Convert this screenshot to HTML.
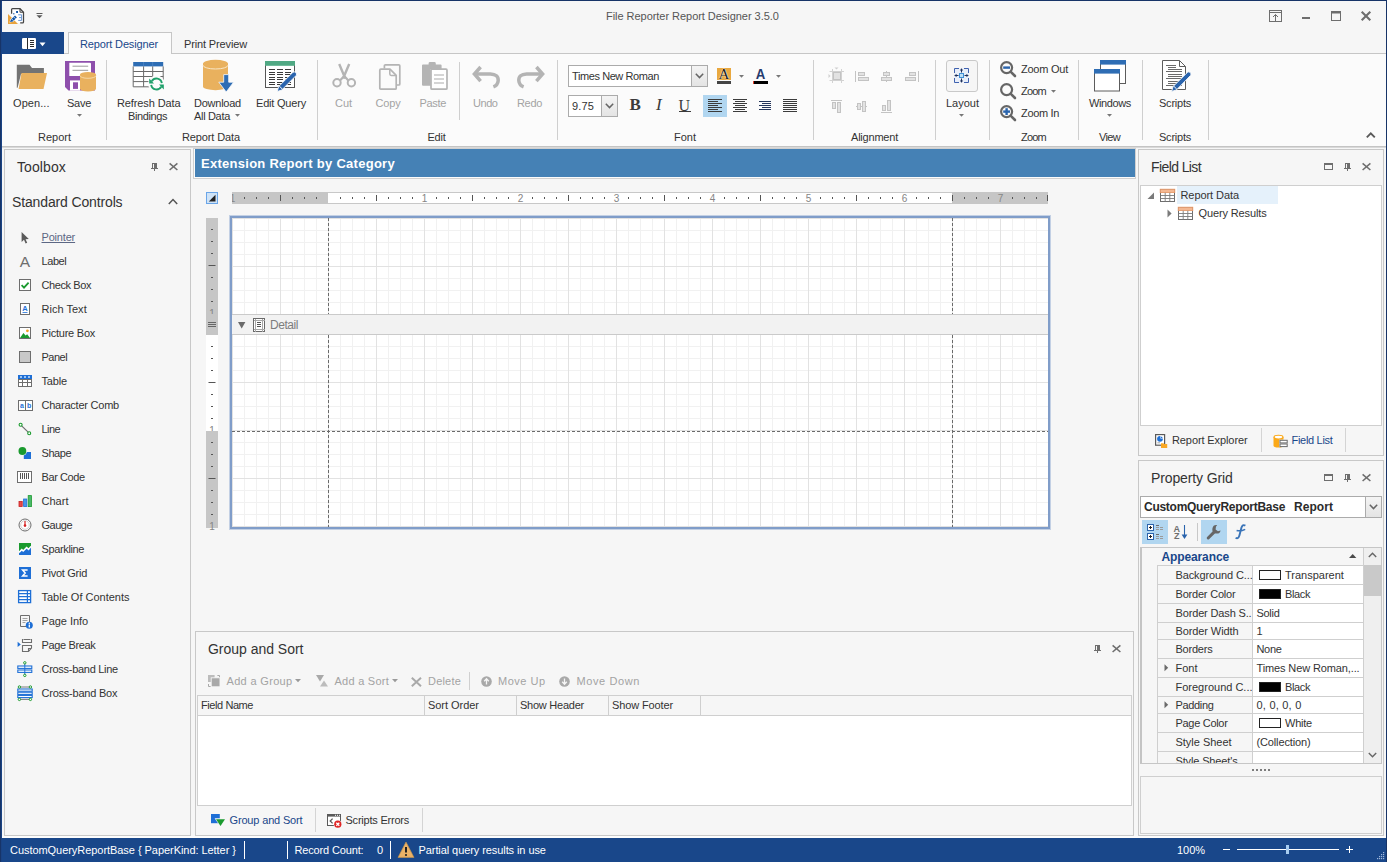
<!DOCTYPE html>
<html>
<head>
<meta charset="utf-8">
<title>File Reporter Report Designer 3.5.0</title>
<style>
*{box-sizing:border-box;margin:0;padding:0}
html,body{width:1387px;height:862px;overflow:hidden}
body{position:relative;background:#f6f6f6;font-family:"Liberation Sans",sans-serif;font-size:11px;color:#333;line-height:13px}
#root div,#root svg{position:absolute}
.t{white-space:pre;line-height:13px;height:13px}
svg{overflow:visible}
.dis{color:#a3a3a3}
</style>
</head>
<body>
<div id="root">
<!-- ribbon -->
<div style="left:2px;top:54px;width:1384px;height:92px;background:#fbfbfb;"></div>
<div class="t" id="t0" style="left:606px;top:10px;color:#555;letter-spacing:-0.04px;">File Reporter Report Designer 3.5.0</div>
<svg style="left:8px;top:8px;" width="16" height="16" viewBox="0 0 16 16"><path d="M3.6,1 H12 L15.6,4.4 V14.8 H3.6 Z" fill="#fff"/><path d="M3.6,5.8 V1.6 Q3.6,0.7 4.5,0.7 H12 L15.5,4.2 V13.9 Q15.5,14.8 14.6,14.8 H12.2" fill="none" stroke="#444" stroke-width="1.25"/><path d="M12,0.8 V3.4 Q12,4.2 12.8,4.2 H15.4" fill="none" stroke="#444" stroke-width="1.1"/><path d="M10.2,6.8 H13.6 V12.4 H10.2 M11,9.6 H13.6" fill="none" stroke="#6a98d4" stroke-width="1"/><rect x="8.1" y="3" width="1.9" height="2" fill="#1054a8"/><rect x="5.2" y="5.2" width="1.2" height="1.2" fill="#1054a8"/><path d="M0,6 V16 H10 Z" fill="#e8a33d"/><path d="M1.4,14.6 L2.6,11.2 L7,6.8 L9.6,9.4 L5.2,13.8 Z" fill="#fff"/><path d="M2,14 L3,11.6 L7,7.6 L8.9,9.5 L4.9,13.5 Z" fill="#1054a8"/><path d="M3.6,10.8 L5.6,12.8 M5.6,8.8 L7.6,10.8" stroke="#fff" stroke-width="0.7"/></svg>
<svg style="left:36px;top:12px;" width="7" height="7" viewBox="0 0 7 7"><path d="M0.5,1.5 H6.5" stroke="#5a5a5a" stroke-width="1"/><path d="M0.5,3.3 H6.5 L3.5,6.2 Z" fill="#5a5a5a"/></svg>
<svg style="left:1269px;top:10px;" width="14" height="12" viewBox="0 0 14 12"><rect x="0.5" y="0.5" width="12" height="11" fill="none" stroke="#6e6e6e"/><path d="M0.5,2.5 H12.5" stroke="#6e6e6e"/><path d="M6.5,4.5 V11 M4,7 L6.5,4.5 L9,7" fill="none" stroke="#6e6e6e"/></svg>
<div style="left:1302px;top:17px;width:8px;height:2px;background:#6e6e6e;"></div>
<svg style="left:1331px;top:11px;" width="10" height="10" viewBox="0 0 10 10"><rect x="0.5" y="0.5" width="9" height="9" fill="none" stroke="#6e6e6e"/><rect x="0" y="0" width="10" height="2.5" fill="#6e6e6e"/></svg>
<svg style="left:1361px;top:11px;" width="10" height="10" viewBox="0 0 10 10"><path d="M0.7,0.7 L9.3,9.3 M9.3,0.7 L0.7,9.3" stroke="#6e6e6e" stroke-width="2.1"/></svg>
<div style="left:2px;top:53px;width:1384px;height:1px;background:#c6c6c6;"></div>
<div style="left:2px;top:32px;width:62px;height:22px;background:#19478a;"></div>
<svg style="left:22px;top:38px;" width="24" height="12" viewBox="0 0 24 12"><rect x="0" y="0" width="14" height="11" rx="1.3" fill="#fff"/><path d="M5.5,0 V11" stroke="#2a2a2a" stroke-width="1"/><path d="M8,2.5 H12 M8,4.5 H12 M8,6.5 H12 M8,8.5 H12" stroke="#2a2a2a" stroke-width="1"/><path d="M17.5,4.6 H23.5 L20.5,8.2 Z" fill="#fff"/></svg>
<div style="left:68px;top:32px;width:104px;height:22px;background:#fbfbfb;border:1px solid #c6c6c6;border-bottom:none"></div>
<div class="t" id="t1" style="left:80px;top:38px;color:#19478a;letter-spacing:-0.14px;">Report Designer</div>
<div class="t" id="t2" style="left:184px;top:38px;letter-spacing:-0.14px;">Print Preview</div>
<div style="left:2px;top:146px;width:1384px;height:1px;background:#c4c4c4;"></div>
<div style="left:2px;top:147px;width:1384px;height:1px;background:#d9d9d9;"></div>
<svg style="left:1366px;top:132px;" width="10" height="6" viewBox="0 0 10 6"><path d="M0.8,5.4 L4.8,1.4 L8.8,5.4" fill="none" stroke="#5a5a5a" stroke-width="1.9"/></svg>
<div style="left:106px;top:60px;width:1px;height:80px;background:#cfcfcf;"></div>
<div style="left:317px;top:60px;width:1px;height:80px;background:#cfcfcf;"></div>
<div style="left:557px;top:60px;width:1px;height:80px;background:#cfcfcf;"></div>
<div style="left:813px;top:60px;width:1px;height:80px;background:#cfcfcf;"></div>
<div style="left:935px;top:60px;width:1px;height:80px;background:#cfcfcf;"></div>
<div style="left:989px;top:60px;width:1px;height:80px;background:#cfcfcf;"></div>
<div style="left:1078px;top:60px;width:1px;height:80px;background:#cfcfcf;"></div>
<div style="left:1142px;top:60px;width:1px;height:80px;background:#cfcfcf;"></div>
<div style="left:1208px;top:60px;width:1px;height:80px;background:#cfcfcf;"></div>
<div style="left:459px;top:62px;width:1px;height:58px;background:#cfcfcf;"></div>
<div class="t" id="t3" style="left:38px;top:131px;">Report</div>
<div class="t" id="t4" style="left:182px;top:131px;letter-spacing:-0.12px;">Report Data</div>
<div class="t" id="t5" style="left:427.5px;top:131px;letter-spacing:-0.24px;">Edit</div>
<div class="t" id="t6" style="left:674px;top:131px;">Font</div>
<div class="t" id="t7" style="left:851px;top:131px;letter-spacing:-0.21px;">Alignment</div>
<div class="t" id="t8" style="left:1021px;top:131px;letter-spacing:-0.78px;">Zoom</div>
<div class="t" id="t9" style="left:1099px;top:131px;letter-spacing:-0.66px;">View</div>
<div class="t" id="t10" style="left:1159px;top:131px;letter-spacing:-0.23px;">Scripts</div>
<svg style="left:15px;top:60px;" width="34" height="32" viewBox="0 0 34 32"><path d="M1.8,4.8 H14.5 L17,8 H28.9 V14 H6 L2.6,27.7 H1.8 Z" fill="#737373"/><path d="M6.5,12.9 H32 L28.5,28.9 H3.6 Z" fill="#e9b15e"/></svg>
<div class="t" id="t11" style="left:13px;top:97px;letter-spacing:0.07px;">Open...</div>
<svg style="left:64px;top:60px;" width="33" height="33" viewBox="0 0 33 33"><path d="M1,1 H31 V30.6 H4.5 L1,27 Z" fill="#8e4fac"/><path d="M5.3,2.8 H26 Q27,2.8 27,3.8 V16 H5.3 Z" fill="#fff"/><path d="M8.5,6.2 H24.2 M8.5,10.3 H24.2" stroke="#9a9a9a" stroke-width="1"/><rect x="6" y="20.4" width="10" height="10.2" fill="#fff"/><rect x="9" y="22.3" width="5" height="6.6" fill="#8e4fac"/><path d="M16,14.6 V28.8 A8,2.7 0 0 0 32,28.8 V14.6 Z" fill="#e9b15e"/><ellipse cx="24" cy="14.6" rx="8" ry="2.7" fill="#e9b15e"/><path d="M16,15.6 A8,2.7 0 0 0 32,15.6" fill="none" stroke="#f6dcae" stroke-width="0.9"/></svg>
<div class="t" id="t12" style="left:67px;top:97px;letter-spacing:-0.27px;">Save</div>
<svg style="left:76.5px;top:114px;" width="5" height="3" viewBox="0 0 5 3"><path d="M0,0 H5 L2.5,2.8 Z" fill="#777"/></svg>
<svg style="left:132px;top:60px;" width="34" height="33" viewBox="0 0 34 33"><rect x="1.2" y="2" width="30" height="24.8" fill="#fff"/><rect x="1.2" y="2" width="30" height="4.4" fill="#2e6db4"/><path d="M11.6,2 V6.4 M20.7,2 V6.4" stroke="#4d86c6" stroke-width="0.8"/><path d="M1.2,6.4 V26.8 H31.2 V6.4 M11.6,6.4 V26.8 M20.7,6.4 V26.8 M1.2,11.5 H31.2 M1.2,16.5 H31.2 M1.2,21.6 H31.2" fill="none" stroke="#6a6a6a" stroke-width="1"/><circle cx="24.5" cy="24" r="8.4" fill="#fbfbfb"/><g transform="translate(49,0) scale(-1,1)"><path d="M19.2,23.2 A5.4,5.4 0 0 1 29.2,21.2" fill="none" stroke="#1fa06a" stroke-width="1.9"/><path d="M31.8,18.6 V23.4 H27 Z" fill="#1fa06a"/><path d="M29.8,24.8 A5.4,5.4 0 0 1 19.8,26.8" fill="none" stroke="#1fa06a" stroke-width="1.9"/><path d="M17.2,29.4 V24.6 H22 Z" fill="#1fa06a"/></g></svg>
<div class="t" id="t13" style="left:117px;top:97px;letter-spacing:-0.11px;">Refresh Data</div>
<div class="t" id="t14" style="left:128px;top:110px;letter-spacing:-0.4px;">Bindings</div>
<svg style="left:202px;top:59px;" width="33" height="34" viewBox="0 0 33 34"><path d="M1,4.6 V27.4 A12.5,3.8 0 0 0 26,27.4 V4.6 Z" fill="#e9b15e"/><ellipse cx="13.5" cy="4.6" rx="12.5" ry="3.8" fill="#e9b15e"/><path d="M1,6.2 A12.5,3.8 0 0 0 26,6.2" fill="none" stroke="#f8e6c6" stroke-width="1"/><path d="M21.7,15.6 H26.7 V23.2 H31.6 L24.2,33 L16.8,23.2 H21.7 Z" fill="#2e6db4" stroke="#fbfbfb" stroke-width="0.8"/></svg>
<div class="t" id="t15" style="left:194px;top:97px;letter-spacing:-0.24px;">Download</div>
<div class="t" id="t16" style="left:194px;top:110px;letter-spacing:-0.32px;">All Data</div>
<svg style="left:234.5px;top:114px;" width="5" height="3" viewBox="0 0 5 3"><path d="M0,0 H5 L2.5,2.8 Z" fill="#777"/></svg>
<svg style="left:264px;top:60px;" width="35" height="33" viewBox="0 0 35 33"><rect x="1.5" y="1.5" width="29" height="26" fill="#fff" stroke="#555" stroke-width="1"/><rect x="1" y="1" width="30" height="4.8" fill="#4fa883"/><path d="M5,9.5 h6 M13,9.5 h6 M21,9.5 h6 M5,12 h6 M13,12 h6 M21,12 h6 M5,14.5 h6 M13,14.5 h6 M21,14.5 h6 M5,17 h6 M13,17 h6 M21,17 h6 M5,19.5 h6 M13,19.5 h6 M21,19.5 h6 M5,22 h6 M13,22 h6 M21,22 h6 M5,24.5 h6 M13,24.5 h6 M21,24.5 h6 " stroke="#3a3a3a" stroke-width="1" shape-rendering="crispEdges"/><path d="M13.2,31.5 L14.6,26.6 L28.8,12.4 Q30.2,11.2 31.6,12.4 Q33.4,14 32.2,15.4 L17.8,30 Z" fill="#2a64ad" stroke="#fbfbfb" stroke-width="0.9"/><path d="M15.2,25.9 L18.4,29.2" stroke="#fbfbfb" stroke-width="1"/></svg>
<div class="t" id="t17" style="left:256px;top:97px;letter-spacing:-0.2px;">Edit Query</div>
<svg style="left:331px;top:63px;" width="27" height="27" viewBox="0 0 27 27"><path d="M8.2,1 L14.3,15.5 M18.2,1 L12.1,15.5" stroke="#b4b4b4" stroke-width="2.4" fill="none"/><path d="M13.2,13 L9,17.4 M13.2,13 L17.4,17.4" stroke="#b4b4b4" stroke-width="2.2"/><circle cx="6" cy="19.8" r="3.7" fill="none" stroke="#b4b4b4" stroke-width="2"/><circle cx="20.4" cy="19.8" r="3.7" fill="none" stroke="#b4b4b4" stroke-width="2"/></svg>
<div class="t dis" id="t18" style="left:335px;top:97px;letter-spacing:-0.04px;">Cut</div>
<svg style="left:378px;top:63px;" width="25" height="28" viewBox="0 0 25 28"><path d="M6.4,5.6 V2.8 Q6.4,1.8 7.4,1.8 H20.8 Q21.8,1.8 21.8,2.8 V21 Q21.8,22 20.8,22 H18.6" fill="none" stroke="#b4b4b4" stroke-width="1.7"/><path d="M2.8,6.2 H12 L18.2,12.4 V25.2 Q18.2,26.2 17.2,26.2 H2.8 Q1.8,26.2 1.8,25.2 V7.2 Q1.8,6.2 2.8,6.2 Z" fill="#fbfbfb" stroke="#b4b4b4" stroke-width="1.7" stroke-linejoin="round"/><path d="M11.8,6.4 V11 Q11.8,12.4 13.2,12.4 H18" fill="none" stroke="#b4b4b4" stroke-width="1.5"/></svg>
<div class="t dis" id="t19" style="left:375.5px;top:97px;letter-spacing:-0.17px;">Copy</div>
<svg style="left:421px;top:61px;" width="28" height="30" viewBox="0 0 28 30"><path d="M2,3.4 H7.6 V2.4 Q7.6,1 9,1 H13.4 Q14.8,1 14.8,2.4 V3.4 H19.6 Q20.6,3.4 20.6,4.4 V8 H9.6 V24.8 H2 Q1,24.8 1,23.8 V4.4 Q1,3.4 2,3.4 Z" fill="#b4b4b4"/><rect x="10" y="8.2" width="16" height="20" rx="1" fill="#fff" stroke="#b4b4b4" stroke-width="1.7"/><path d="M13,14 H23 M13,18 H23 M13,22 H23" stroke="#c8c8c8" stroke-width="1.7"/></svg>
<div class="t dis" id="t20" style="left:419.5px;top:97px;letter-spacing:-0.33px;">Paste</div>
<svg style="left:471px;top:64px;" width="31" height="26" viewBox="0 0 31 26"><path d="M9.6,3 L3.4,10 L9.6,17.2" stroke="#b4b4b4" stroke-width="3.5" stroke-linejoin="miter" stroke-miterlimit="10" fill="none"/><path d="M4,9.9 H19.4 Q27.6,10.2 27.2,16.6 Q26.8,21.2 22.4,22.8" fill="none" stroke="#b4b4b4" stroke-width="3.5"/></svg>
<div class="t dis" id="t21" style="left:473px;top:97px;letter-spacing:-0.45px;">Undo</div>
<svg style="left:516px;top:64px;" width="31" height="26" viewBox="0 0 31 26"><g transform="translate(30,0) scale(-1,1)"><path d="M9.6,3 L3.4,10 L9.6,17.2" stroke="#b4b4b4" stroke-width="3.5" stroke-linejoin="miter" stroke-miterlimit="10" fill="none"/><path d="M4,9.9 H19.4 Q27.6,10.2 27.2,16.6 Q26.8,21.2 22.4,22.8" fill="none" stroke="#b4b4b4" stroke-width="3.5"/></g></svg>
<div class="t dis" id="t22" style="left:517px;top:97px;letter-spacing:-0.32px;">Redo</div>
<!-- ribbon2 -->
<div style="left:568px;top:65px;width:140px;height:22px;background:#fff;border:1px solid #ababab"></div>
<div style="left:691px;top:66px;width:16px;height:20px;background:linear-gradient(#f4f4f4,#e4e4e4);border-left:1px solid #ababab"></div>
<svg style="left:695px;top:73px;" width="9" height="6" viewBox="0 0 9 6"><path d="M0.8,0.8 L4.5,4.6 L8.2,0.8" fill="none" stroke="#666" stroke-width="1.5"/></svg>
<div class="t" id="t23" style="left:572px;top:70px;letter-spacing:-0.41px;">Times New Roman</div>
<div style="left:568px;top:95px;width:50px;height:22px;background:#fff;border:1px solid #ababab"></div>
<div style="left:601px;top:96px;width:16px;height:20px;background:linear-gradient(#f4f4f4,#e4e4e4);border-left:1px solid #ababab"></div>
<svg style="left:605px;top:103px;" width="9" height="6" viewBox="0 0 9 6"><path d="M0.8,0.8 L4.5,4.6 L8.2,0.8" fill="none" stroke="#666" stroke-width="1.5"/></svg>
<div class="t" id="t24" style="left:572px;top:100px;letter-spacing:0.14px;">9.75</div>
<div class="t" style="left:629.5px;top:95px;font:bold 17px/20px 'Liberation Serif',serif;height:19px;color:#3b3b3b">B</div>
<div class="t" style="left:656px;top:95px;font:italic 17px/20px 'Liberation Serif',serif;height:19px;color:#3b3b3b">I</div>
<div class="t" style="left:678.5px;top:96px;font:16px/19px 'Liberation Serif',serif;height:19px;color:#3b3b3b">U</div>
<div style="left:679px;top:111px;width:12px;height:1px;background:#3b3b3b;"></div>
<div style="left:717px;top:68px;width:14px;height:12px;background:#e9a83f;"></div>
<div class="t" style="left:717px;top:66px;width:14px;text-align:center;font:15px/16px 'Liberation Serif',serif;height:16px;color:#1a1a1a;text-shadow:0 0 1px #fff,0 0 1.5px #fff">A</div>
<div style="left:717px;top:81px;width:14px;height:3px;background:#444;"></div>
<svg style="left:738.5px;top:75px;" width="5" height="3" viewBox="0 0 5 3"><path d="M0,0 H5 L2.5,2.8 Z" fill="#777"/></svg>
<div class="t" style="left:753px;top:65px;width:15px;text-align:center;font:bold 15px/17px 'Liberation Sans',sans-serif;height:17px;color:#263a6e;transform:scaleX(0.88)">A</div>
<div style="left:753px;top:81px;width:15px;height:3px;background:#000;"></div>
<div style="left:753px;top:81px;width:1px;height:3px;background:#e0402a;"></div>
<svg style="left:775.5px;top:75px;" width="5" height="3" viewBox="0 0 5 3"><path d="M0,0 H5 L2.5,2.8 Z" fill="#777"/></svg>
<div style="left:703px;top:95px;width:24px;height:22px;background:#b1d6f0;"></div>
<svg style="left:708px;top:99px;" width="16" height="15" viewBox="0 0 16 15"><path d="M0,0.50 H14 M0,2.50 H10 M0,4.50 H14 M0,6.50 H10 M0,8.50 H14 M0,10.50 H10 M0,12.50 H14 " stroke="#3b3b3b" stroke-width="1" shape-rendering="crispEdges"/></svg>
<svg style="left:733px;top:99px;" width="16" height="15" viewBox="0 0 16 15"><path d="M0,0.50 H14 M2,2.50 H12 M0,4.50 H14 M2,6.50 H12 M0,8.50 H14 M2,10.50 H12 M0,12.50 H14 " stroke="#3b3b3b" stroke-width="1" shape-rendering="crispEdges"/></svg>
<svg style="left:759px;top:101px;" width="16" height="15" viewBox="0 0 16 15"><path d="M0,0.50 H12 M3.4,2.50 H12 M0,4.50 H12 M3.4,6.50 H12 M0,8.50 H12 " stroke="#24355a" stroke-width="1" shape-rendering="crispEdges"/></svg>
<svg style="left:783px;top:99px;" width="16" height="15" viewBox="0 0 16 15"><path d="M0,0.50 H14 M0,2.50 H14 M0,4.50 H14 M0,6.50 H14 M0,8.50 H14 M0,10.50 H14 M0,12.50 H14 " stroke="#3b3b3b" stroke-width="1" shape-rendering="crispEdges"/></svg>
<svg style="left:828px;top:67px;" width="17" height="17" viewBox="0 0 17 17"><path d="M4.5,2 V16 M13.5,2 V16 M1.5,4.5 H16 M1.5,13.5 H16" stroke="#d2d2d2"/><rect x="5.5" y="5.5" width="7" height="7" fill="#e2e2e2" stroke="#c3c3c3" stroke-width="1"/><path d="M6.5,0.5 h4 l-2,2 Z M0.5,7 v4 l2,-2 Z" fill="#d0d0d0"/></svg>
<svg style="left:855px;top:67px;" width="14" height="17" viewBox="0 0 14 17"><path d="M0.5,4 V15" stroke="#c3c3c3"/><rect x="3.5" y="5.5" width="6" height="3" fill="#e2e2e2" stroke="#c3c3c3" stroke-width="1"/><rect x="3.5" y="10.5" width="10" height="3" fill="#e2e2e2" stroke="#c3c3c3" stroke-width="1"/></svg>
<svg style="left:880px;top:67px;" width="14" height="17" viewBox="0 0 14 17"><path d="M6.5,4 V15" stroke="#c3c3c3"/><rect x="3.5" y="5.5" width="6" height="3" fill="#e2e2e2" stroke="#c3c3c3" stroke-width="1"/><rect x="1.5" y="10.5" width="10" height="3" fill="#e2e2e2" stroke="#c3c3c3" stroke-width="1"/></svg>
<svg style="left:905px;top:67px;" width="15" height="17" viewBox="0 0 15 17"><path d="M13.5,4 V15" stroke="#c3c3c3"/><rect x="4.5" y="5.5" width="6" height="3" fill="#e2e2e2" stroke="#c3c3c3" stroke-width="1"/><rect x="0.5" y="10.5" width="10" height="3" fill="#e2e2e2" stroke="#c3c3c3" stroke-width="1"/></svg>
<svg style="left:830px;top:99px;" width="14" height="15" viewBox="0 0 14 15"><path d="M1,1.5 H12" stroke="#c3c3c3"/><rect x="2.5" y="3.5" width="3" height="6" fill="#e2e2e2" stroke="#c3c3c3" stroke-width="1"/><rect x="7.5" y="3.5" width="3" height="10" fill="#e2e2e2" stroke="#c3c3c3" stroke-width="1"/></svg>
<svg style="left:855px;top:99px;" width="14" height="15" viewBox="0 0 14 15"><path d="M1,7.5 H12" stroke="#c3c3c3"/><rect x="2.5" y="4.5" width="3" height="6" fill="#e2e2e2" stroke="#c3c3c3" stroke-width="1"/><rect x="7.5" y="2.5" width="3" height="10" fill="#e2e2e2" stroke="#c3c3c3" stroke-width="1"/></svg>
<svg style="left:880px;top:99px;" width="14" height="15" viewBox="0 0 14 15"><path d="M1,13.5 H12" stroke="#c3c3c3"/><rect x="2.5" y="6.5" width="3" height="5" fill="#e2e2e2" stroke="#c3c3c3" stroke-width="1"/><rect x="7.5" y="1.5" width="3" height="10" fill="#e2e2e2" stroke="#c3c3c3" stroke-width="1"/></svg>
<div style="left:946px;top:60px;width:32px;height:32px;background:#f6f6f6;border:1px solid #c9c9c9;border-radius:3px"></div>
<svg style="left:954px;top:68px;" width="15" height="15" viewBox="0 0 15 15"><rect x="0.5" y="0.5" width="14" height="14" fill="#e8eef9"/><path d="M0.5,5 V0.5 H5 M10,0.5 H14.5 V5 M14.5,10 V14.5 H10 M5,14.5 H0.5 V10" fill="none" stroke="#3f62b0" stroke-width="1"/><rect x="5.5" y="5.5" width="4" height="4" fill="#bfe0f6" stroke="#3f8fd6" stroke-width="1"/><path d="M7.5,1 V4.5 M7.5,10.5 V14 M1,7.5 H4.5 M10.5,7.5 H14" stroke="#1d2f5a" stroke-width="1"/><path d="M5.9,2.6 L7.5,0.2 L9.1,2.6 Z M5.9,12.4 L7.5,14.8 L9.1,12.4 Z M2.6,5.9 L0.2,7.5 L2.6,9.1 Z M12.4,5.9 L14.8,7.5 L12.4,9.1 Z" fill="#1d2f5a"/></svg>
<div class="t" id="t25" style="left:946px;top:97px;">Layout</div>
<svg style="left:959.0px;top:114px;" width="5" height="3" viewBox="0 0 5 3"><path d="M0,0 H5 L2.5,2.8 Z" fill="#777"/></svg>
<svg style="left:1000px;top:61px;" width="17" height="17" viewBox="0 0 17 17"><circle cx="6.6" cy="6.6" r="5.5" fill="#fbfbfb" stroke="#666" stroke-width="2.2"/><path d="M10.8,10.8 L15,15" stroke="#666" stroke-width="2.6" stroke-linecap="round"/><path d="M3.2,6.6 H10" stroke="#2a64ad" stroke-width="2.4"/></svg>
<div class="t" id="t26" style="left:1021px;top:63px;letter-spacing:-0.24px;">Zoom Out</div>
<svg style="left:1000px;top:83px;" width="17" height="17" viewBox="0 0 17 17"><circle cx="6.6" cy="6.6" r="5.5" fill="#fbfbfb" stroke="#666" stroke-width="2.2"/><path d="M10.8,10.8 L15,15" stroke="#666" stroke-width="2.6" stroke-linecap="round"/></svg>
<div class="t" id="t27" style="left:1021px;top:85px;letter-spacing:-0.78px;">Zoom</div>
<svg style="left:1051.0px;top:90px;" width="5" height="3" viewBox="0 0 5 3"><path d="M0,0 H5 L2.5,2.8 Z" fill="#777"/></svg>
<svg style="left:1000px;top:105px;" width="17" height="17" viewBox="0 0 17 17"><circle cx="6.6" cy="6.6" r="5.5" fill="#fbfbfb" stroke="#666" stroke-width="2.2"/><path d="M10.8,10.8 L15,15" stroke="#666" stroke-width="2.6" stroke-linecap="round"/><path d="M3.2,6.6 H10" stroke="#2a64ad" stroke-width="2.4"/><path d="M6.6,3.2 V10" stroke="#2a64ad" stroke-width="2.4"/></svg>
<div class="t" id="t28" style="left:1021px;top:107px;letter-spacing:-0.34px;">Zoom In</div>
<svg style="left:1093px;top:59px;" width="34" height="34" viewBox="0 0 34 34"><rect x="7.5" y="1.5" width="25" height="23" fill="#fff" stroke="#5c5c5c"/><rect x="7" y="1" width="26" height="4.6" fill="#2e6db4"/><rect x="1.5" y="10.5" width="25" height="21.5" fill="#fff" stroke="#5c5c5c"/><rect x="1" y="10" width="26" height="4.6" fill="#2e6db4"/></svg>
<div class="t" id="t29" style="left:1089px;top:97px;letter-spacing:-0.38px;">Windows</div>
<svg style="left:1107.0px;top:114px;" width="5" height="3" viewBox="0 0 5 3"><path d="M0,0 H5 L2.5,2.8 Z" fill="#777"/></svg>
<svg style="left:1161px;top:59px;" width="32" height="34" viewBox="0 0 32 34"><path d="M1.5,1.5 H18.5 L24.5,7.5 V30.5 H1.5 Z" fill="#fff" stroke="#5c5c5c"/><path d="M18.5,1.5 V7.5 H24.5" fill="none" stroke="#5c5c5c"/><path d="M5,6.0 H15 M7,8.3 H15 M7,10.6 H21 M5,12.9 H21 M7,15.2 H21 M7,17.5 H21 M5,19.8 H21 M7,22.1 H21 M7,24.4 H21 M5,26.7 H21 " stroke="#6a6a6a" stroke-width="1" shape-rendering="crispEdges"/><path d="M10.6,32.4 L12,27.6 L26.4,13.4 Q27.8,12.2 29.2,13.4 Q30.8,15 29.6,16.4 L15.4,31 Z" fill="#2a64ad" stroke="#fbfbfb" stroke-width="0.9"/><path d="M12.6,27 L15.8,30.2" stroke="#fbfbfb" stroke-width="1"/></svg>
<div class="t" id="t30" style="left:1159px;top:97px;letter-spacing:-0.23px;">Scripts</div>
<!-- left -->
<div style="left:4px;top:149px;width:187px;height:687px;background:#f6f6f6;border:1px solid #c8c8c8"></div>
<div class="t" id="t31" style="left:17px;top:159px;font-size:14px;line-height:17px;height:17px;letter-spacing:0.1px;">Toolbox</div>
<svg style="left:151px;top:163px;" width="8" height="9" viewBox="0 0 8 9"><path d="M1,0.5 H6 M1.5,0 V5.5 M0,5.5 H7 M3.5,6 V8" stroke="#6e6e6e" stroke-width="1" fill="none"/><rect x="3" y="0" width="3" height="5.5" fill="#6e6e6e"/></svg>
<svg style="left:169px;top:163px;" width="9" height="8" viewBox="0 0 9 8"><path d="M0.6,0.3 L8.4,7 M8.4,0.3 L0.6,7" stroke="#6e6e6e" stroke-width="1.55"/></svg>
<div class="t" id="t32" style="left:12px;top:194px;font-size:14px;line-height:17px;height:17px;letter-spacing:-0.14px;">Standard Controls</div>
<svg style="left:168px;top:198px;" width="10" height="7" viewBox="0 0 10 7"><path d="M0.8,6 L5,1.6 L9.2,6" fill="none" stroke="#555" stroke-width="1.5"/></svg>
<svg style="left:17px;top:229px;" width="16" height="16" viewBox="0 0 16 16"><path d="M4.6,3 V13 L7,10.8 L8.6,14.4 L10.2,13.7 L8.6,10.2 L11.8,10 Z" fill="#5a5a5a"/></svg>
<div class="t" id="t33" style="left:41.5px;top:231px;color:#5c6784;text-decoration:underline;letter-spacing:-0.18px;">Pointer</div>
<svg style="left:17px;top:253px;" width="16" height="16" viewBox="0 0 16 16"><text x="8" y="13.6" text-anchor="middle" font-family="Liberation Sans, sans-serif" font-size="15.5" fill="#6e6e6e">A</text></svg>
<div class="t" id="t34" style="left:41.5px;top:255px;letter-spacing:-0.42px;">Label</div>
<svg style="left:17px;top:277px;" width="16" height="16" viewBox="0 0 16 16"><rect x="2.5" y="2.5" width="11" height="11" fill="#fff" stroke="#6e6e6e"/><path d="M4.6,8.2 L7,10.6 L11.6,5.6" fill="none" stroke="#1a9a2e" stroke-width="1.8"/></svg>
<div class="t" id="t35" style="left:41.5px;top:279px;letter-spacing:-0.4px;">Check Box</div>
<svg style="left:17px;top:301px;" width="16" height="16" viewBox="0 0 16 16"><rect x="3.5" y="2.5" width="9" height="11" fill="#fff" stroke="#6e6e6e"/><text x="8" y="10" text-anchor="middle" font-family="Liberation Sans, sans-serif" font-weight="bold" font-size="7.5" fill="#1e6fd6">A</text><path d="M5.5,11.5 H10.5" stroke="#1e6fd6" stroke-width="0.8"/></svg>
<div class="t" id="t36" style="left:41.5px;top:303px;letter-spacing:0.02px;">Rich Text</div>
<svg style="left:17px;top:325px;" width="16" height="16" viewBox="0 0 16 16"><rect x="2.5" y="2.5" width="11" height="11" fill="#fff" stroke="#6e6e6e"/><path d="M3,13 L6.4,8 L8.6,10.6 L10.2,9.2 L13,13 Z" fill="#1a9a2e"/><circle cx="10.4" cy="5.8" r="1.4" fill="#f0a020"/></svg>
<div class="t" id="t37" style="left:41.5px;top:327px;letter-spacing:-0.25px;">Picture Box</div>
<svg style="left:17px;top:349px;" width="16" height="16" viewBox="0 0 16 16"><rect x="2.5" y="2.5" width="11" height="11" fill="#c8c8c8" stroke="#6e6e6e"/></svg>
<div class="t" id="t38" style="left:41.5px;top:351px;letter-spacing:-0.49px;">Panel</div>
<svg style="left:17px;top:373px;" width="16" height="16" viewBox="0 0 16 16"><g shape-rendering="crispEdges"><rect x="1" y="2" width="14" height="12" fill="#fff"/><rect x="1" y="2" width="14" height="4" fill="#1e6fd6"/><path d="M3,4 h2 M7,4 h2 M11,4 h2" stroke="#9cc4f2" stroke-width="2"/><path d="M1.5,6 V13.5 H14.5 V6 M5.5,6 V13.5 M10.5,6 V13.5 M1.5,9.5 H14.5 M1.5,6.5 H14.5" fill="none" stroke="#6e6e6e" stroke-width="1"/></g></svg>
<div class="t" id="t39" style="left:41.5px;top:375px;letter-spacing:-0.16px;">Table</div>
<svg style="left:17px;top:397px;" width="16" height="16" viewBox="0 0 16 16"><rect x="1.5" y="3.5" width="14" height="10" fill="#fff" stroke="#6e6e6e"/><path d="M8.5,3.5 V13.5" stroke="#6e6e6e"/><text x="5" y="11.2" text-anchor="middle" font-family="Liberation Sans, sans-serif" font-weight="bold" font-size="7" fill="#1e6fd6">a</text><text x="12.2" y="11.2" text-anchor="middle" font-family="Liberation Sans, sans-serif" font-weight="bold" font-size="7" fill="#1e6fd6">b</text></svg>
<div class="t" id="t40" style="left:41.5px;top:399px;letter-spacing:-0.23px;">Character Comb</div>
<svg style="left:17px;top:421px;" width="16" height="16" viewBox="0 0 16 16"><path d="M4.4,4.6 L11.4,11.4" stroke="#6e6e6e" stroke-width="1.2"/><circle cx="3.6" cy="3.8" r="1.5" fill="#fff" stroke="#1a9a2e" stroke-width="1.1"/><circle cx="12.2" cy="12.2" r="1.5" fill="#fff" stroke="#1a9a2e" stroke-width="1.1"/></svg>
<div class="t" id="t41" style="left:41.5px;top:423px;letter-spacing:-0.55px;">Line</div>
<svg style="left:17px;top:445px;" width="16" height="16" viewBox="0 0 16 16"><path d="M6.8,7 H14 V14 H6.8 Z" fill="#1e6fd6"/><circle cx="5.4" cy="6" r="4.6" fill="#f6f6f6"/><circle cx="5.4" cy="6" r="3.9" fill="#1a9a2e"/></svg>
<div class="t" id="t42" style="left:41.5px;top:447px;letter-spacing:-0.44px;">Shape</div>
<svg style="left:17px;top:469px;" width="16" height="16" viewBox="0 0 16 16"><rect x="0.5" y="2.5" width="14" height="11" fill="#fff" stroke="#6e6e6e"/><path d="M3.5,4 V10 M5.5,4 V10 M7.5,4 V10 M9.5,4 V10 M11.5,4 V10" stroke="#555" stroke-width="1"/></svg>
<div class="t" id="t43" style="left:41.5px;top:471px;letter-spacing:-0.4px;">Bar Code</div>
<svg style="left:17px;top:493px;" width="16" height="16" viewBox="0 0 16 16"><rect x="2" y="8.5" width="3.2" height="5" fill="#e84a4a" stroke="#c81e1e" stroke-width="0.8"/><rect x="6.6" y="6" width="3.2" height="7.5" fill="#4a96e8" stroke="#1e6fd6" stroke-width="0.8"/><rect x="11.2" y="2.6" width="3.2" height="11" fill="#4ab86a" stroke="#1a9a2e" stroke-width="0.8"/></svg>
<div class="t" id="t44" style="left:41.5px;top:495px;letter-spacing:0.02px;">Chart</div>
<svg style="left:17px;top:517px;" width="16" height="16" viewBox="0 0 16 16"><circle cx="8" cy="8" r="6" fill="#fff" stroke="#6e6e6e" stroke-width="1"/><circle cx="8" cy="8" r="4.3" fill="none" stroke="#bdbdbd" stroke-width="0.7"/><path d="M8,4 V8" stroke="#d42020" stroke-width="1.2"/><circle cx="8" cy="8.6" r="1.3" fill="#d42020"/></svg>
<div class="t" id="t45" style="left:41.5px;top:519px;letter-spacing:-0.49px;">Gauge</div>
<svg style="left:17px;top:541px;" width="16" height="16" viewBox="0 0 16 16"><rect x="2" y="2" width="12" height="12" fill="#1e6fd6"/><path d="M2,2 H14 V5.4 L11.6,8.4 L9.6,6.6 L6.2,10 L4.8,8.6 L2,11.4 Z" fill="#1a9a2e"/><path d="M2,11.4 L4.8,8.6 L6.2,10 L9.6,6.6 L11.6,8.4 L14,5.4" fill="none" stroke="#fff" stroke-width="1.5"/></svg>
<div class="t" id="t46" style="left:41.5px;top:543px;letter-spacing:-0.36px;">Sparkline</div>
<svg style="left:17px;top:565px;" width="16" height="16" viewBox="0 0 16 16"><rect x="2" y="2" width="12" height="12" fill="#1e6fd6"/><path d="M10.6,5 H5.6 L8.2,8 L5.6,11 H10.6" fill="none" stroke="#fff" stroke-width="1.5"/></svg>
<div class="t" id="t47" style="left:41.5px;top:567px;letter-spacing:-0.28px;">Pivot Grid</div>
<svg style="left:17px;top:589px;" width="16" height="16" viewBox="0 0 16 16"><rect x="1.6" y="1.6" width="12" height="12" fill="#fff" stroke="#1e6fd6" stroke-width="1.3"/><path d="M1.6,4.6 H13.6 M1.6,7.6 H13.6 M1.6,10.6 H13.6 M10.4,1.6 V13.6" stroke="#1e6fd6" stroke-width="1.2"/></svg>
<div class="t" id="t48" style="left:41.5px;top:591px;">Table Of Contents</div>
<svg style="left:17px;top:613px;" width="16" height="16" viewBox="0 0 16 16"><path d="M3.5,2.5 H12.5 V9 M3.5,2.5 V13.5 H9" fill="none" stroke="#6e6e6e"/><path d="M5.5,5.5 H10.5 M5.5,7.5 H10.5 M5.5,9.5 H8.5" stroke="#9a9a9a" stroke-width="0.9"/><circle cx="12.3" cy="12.3" r="3.5" fill="#1e6fd6"/><path d="M12.3,11.4 V14.4" stroke="#fff" stroke-width="1.3"/><circle cx="12.3" cy="10.2" r="0.8" fill="#fff"/></svg>
<div class="t" id="t49" style="left:41.5px;top:615px;letter-spacing:-0.07px;">Page Info</div>
<svg style="left:17px;top:637px;" width="16" height="16" viewBox="0 0 16 16"><path d="M0.6,4.8 V10 L3.8,7.4 Z" fill="#1e6fd6"/><path d="M5.5,2 V5.5 H14.5 V2 M6.5,2.5 H13.5 M5.5,14.5 V8.5 H14.5 V11 L11.5,14.5 Z M11.5,14.5 V11.5 H14.5" fill="none" stroke="#6e6e6e" stroke-width="1.1"/></svg>
<div class="t" id="t50" style="left:41.5px;top:639px;letter-spacing:-0.35px;">Page Break</div>
<svg style="left:17px;top:661px;" width="16" height="16" viewBox="0 0 16 16"><rect x="0.8" y="5" width="14" height="2.4" fill="#fff" stroke="#1e6fd6" stroke-width="1.1"/><rect x="0.8" y="9" width="14" height="2.4" fill="#fff" stroke="#1e6fd6" stroke-width="1.1"/><path d="M7.8,2.6 V13.8" stroke="#1e6fd6" stroke-width="1"/><circle cx="7.8" cy="1.8" r="1.2" fill="#fff" stroke="#1a9a2e" stroke-width="1"/><circle cx="7.8" cy="14.4" r="1.2" fill="#fff" stroke="#1a9a2e" stroke-width="1"/></svg>
<div class="t" id="t51" style="left:41.5px;top:663px;letter-spacing:-0.29px;">Cross-band Line</div>
<svg style="left:17px;top:685px;" width="16" height="16" viewBox="0 0 16 16"><path d="M2.6,2 H13 M2.6,14.4 H13" stroke="#6e6e6e" stroke-width="0.9"/><rect x="0.8" y="4" width="14.4" height="2.2" fill="#fff" stroke="#1e6fd6" stroke-width="1.1"/><rect x="0.8" y="7.2" width="14.4" height="2.2" fill="#fff" stroke="#1e6fd6" stroke-width="1.1"/><rect x="0.8" y="10.4" width="14.4" height="2.2" fill="#fff" stroke="#1e6fd6" stroke-width="1.1"/><circle cx="2.4" cy="2" r="1.2" fill="#fff" stroke="#1a9a2e"/><circle cx="13.4" cy="2" r="1.2" fill="#fff" stroke="#1a9a2e"/><circle cx="2.4" cy="14.4" r="1.2" fill="#fff" stroke="#1a9a2e"/><circle cx="13.4" cy="14.4" r="1.2" fill="#fff" stroke="#1a9a2e"/></svg>
<div class="t" id="t52" style="left:41.5px;top:687px;letter-spacing:-0.23px;">Cross-band Box</div>
<!-- doc -->
<div style="left:193px;top:148px;width:943px;height:31px;background:#fbfbfb;border:1px solid #d0d0d0"></div>
<div style="left:195px;top:149px;width:940px;height:28px;background:#4581b5;"></div>
<div class="t" id="t53" style="left:201px;top:156px;font-size:13px;line-height:16px;height:16px;font-weight:bold;color:#fff;letter-spacing:0.27px;">Extension Report by Category</div>
<div style="left:206px;top:192px;width:12px;height:12px;background:#cfe3f7;border:1px solid #6aa5e8"></div>
<svg style="left:208px;top:194px;" width="8" height="8" viewBox="0 0 8 8"><path d="M7.5,0.8 V7.5 H0.8 Z" fill="#222"/></svg>
<div style="left:232px;top:192px;width:816px;height:12px;background:#fff;"></div>
<div style="left:328px;top:192px;width:624px;height:1px;background:#c8c8c8;"></div>
<div style="left:328px;top:203px;width:624px;height:1px;background:#c8c8c8;"></div>
<div style="left:232px;top:192px;width:96px;height:12px;background:#c6c6c6;"></div>
<div style="left:952px;top:192px;width:96px;height:12px;background:#c6c6c6;"></div>
<svg style="left:232px;top:192px;" width="816" height="12" viewBox="0 0 816 12"><path d="M48.5,3 V9 M144.5,3 V9 M240.5,3 V9 M336.5,3 V9 M432.5,3 V9 M528.5,3 V9 M624.5,3 V9 M720.5,3 V9 " stroke="#555" stroke-width="1"/><path d="M12.5,5 v2 M24.5,5 v2 M36.5,5 v2 M60.5,5 v2 M72.5,5 v2 M84.5,5 v2 M108.5,5 v2 M120.5,5 v2 M132.5,5 v2 M156.5,5 v2 M168.5,5 v2 M180.5,5 v2 M204.5,5 v2 M216.5,5 v2 M228.5,5 v2 M252.5,5 v2 M264.5,5 v2 M276.5,5 v2 M300.5,5 v2 M312.5,5 v2 M324.5,5 v2 M348.5,5 v2 M360.5,5 v2 M372.5,5 v2 M396.5,5 v2 M408.5,5 v2 M420.5,5 v2 M444.5,5 v2 M456.5,5 v2 M468.5,5 v2 M492.5,5 v2 M504.5,5 v2 M516.5,5 v2 M540.5,5 v2 M552.5,5 v2 M564.5,5 v2 M588.5,5 v2 M600.5,5 v2 M612.5,5 v2 M636.5,5 v2 M648.5,5 v2 M660.5,5 v2 M684.5,5 v2 M696.5,5 v2 M708.5,5 v2 M732.5,5 v2 M744.5,5 v2 M756.5,5 v2 M780.5,5 v2 M792.5,5 v2 M804.5,5 v2 " stroke="#555" stroke-width="1"/><path d="M815.5,3 V9" stroke="#555"/></svg>
<div style="left:232px;top:192px;width:816px;height:12px;overflow:hidden"><div class="t" style="left:-10px;top:1px;width:21px;text-align:center;font-size:10px;line-height:12px;height:12px;color:#858585">1</div><div class="t" style="left:182px;top:1px;width:21px;text-align:center;font-size:10px;line-height:12px;height:12px;color:#858585">1</div><div class="t" style="left:278px;top:1px;width:21px;text-align:center;font-size:10px;line-height:12px;height:12px;color:#858585">2</div><div class="t" style="left:374px;top:1px;width:21px;text-align:center;font-size:10px;line-height:12px;height:12px;color:#858585">3</div><div class="t" style="left:470px;top:1px;width:21px;text-align:center;font-size:10px;line-height:12px;height:12px;color:#858585">4</div><div class="t" style="left:566px;top:1px;width:21px;text-align:center;font-size:10px;line-height:12px;height:12px;color:#858585">5</div><div class="t" style="left:662px;top:1px;width:21px;text-align:center;font-size:10px;line-height:12px;height:12px;color:#858585">6</div><div class="t" style="left:758px;top:1px;width:21px;text-align:center;font-size:10px;line-height:12px;height:12px;color:#858585">7</div></div>
<div style="left:206px;top:218px;width:12px;height:310px;background:#c6c6c6;"></div>
<div style="left:206px;top:335px;width:12px;height:96px;background:#fff;"></div>
<svg style="left:206px;top:218px;" width="12" height="310" viewBox="0 0 12 310"><path d="M2.5,47.5 H9.5 M2.5,164.5 H9.5 M2.5,260.5 H9.5 " stroke="#555" stroke-width="1"/><path d="M5,11.5 h2 M5,23.5 h2 M5,35.5 h2 M5,59.5 h2 M5,71.5 h2 M5,83.5 h2 M5,128.5 h2 M5,140.5 h2 M5,152.5 h2 M5,176.5 h2 M5,188.5 h2 M5,200.5 h2 M5,224.5 h2 M5,236.5 h2 M5,248.5 h2 M5,272.5 h2 M5,284.5 h2 M5,296.5 h2 " stroke="#555" stroke-width="1"/><path d="M2,104.5 H10 M2,106.5 H10 M2,108.5 H10" stroke="#666" stroke-width="1"/></svg>
<div style="left:206px;top:218px;width:12px;height:96px;overflow:hidden"><div class="t" style="left:0;top:90px;width:12px;text-align:center;font-size:10px;line-height:12px;height:12px;color:#858585">1</div></div>
<div style="left:206px;top:335px;width:12px;height:96px;overflow:hidden"><div class="t" style="left:0;top:90px;width:12px;text-align:center;font-size:10px;line-height:12px;height:12px;color:#858585">1</div></div>
<div style="left:206px;top:431px;width:12px;height:99px;overflow:hidden"><div class="t" style="left:0;top:90px;width:12px;text-align:center;font-size:10px;line-height:12px;height:12px;color:#858585">1</div></div>
<div style="left:229px;top:215px;width:822px;height:315px;background:#fff;border:1px solid #c3d0e4"></div>
<div style="left:230px;top:216px;width:820px;height:313px;background:#fff;border:2px solid #809dc9"></div>
<div style="left:232px;top:218px;width:816px;height:96px;background:#fff;background-image:linear-gradient(90deg,#e2e2e2 1px,transparent 1px),linear-gradient(#e2e2e2 1px,transparent 1px),linear-gradient(90deg,#f1f1f1 1px,transparent 1px),linear-gradient(#f1f1f1 1px,transparent 1px);background-size:48px 48px,48px 48px,12px 12px,12px 12px;background-position:0 0"></div>
<div style="left:232px;top:335px;width:816px;height:192px;background:#fff;background-image:linear-gradient(90deg,#e2e2e2 1px,transparent 1px),linear-gradient(#e2e2e2 1px,transparent 1px),linear-gradient(90deg,#f1f1f1 1px,transparent 1px),linear-gradient(#f1f1f1 1px,transparent 1px);background-size:48px 48px,48px 48px,12px 12px,12px 12px;background-position:0 -1px,0 -1px,0 -1px,0 -1px"></div>
<div style="left:232px;top:314px;width:816px;height:21px;background:#f2f2f2;border-top:1px solid #cacaca;border-bottom:1px solid #cacaca"></div>
<svg style="left:238px;top:322px;" width="8" height="7" viewBox="0 0 8 7"><path d="M0,0 H7.4 L3.7,6.4 Z" fill="#6a6a6a"/></svg>
<svg style="left:253px;top:318px;" width="12" height="14" viewBox="0 0 12 14"><rect x="0.5" y="0.5" width="11" height="13" fill="#fff" stroke="#6a6a6a"/><path d="M2.5,0.5 V13.5 M9.5,0.5 V13.5 M0.5,2.5 H11.5 M0.5,11.5 H11.5" stroke="#a8a8a8" stroke-width="1" shape-rendering="crispEdges"/><path d="M4,4.5 H8 M4,6.5 H8 M4,8.5 H8" stroke="#555" stroke-width="1" shape-rendering="crispEdges"/></svg>
<div class="t" id="t54" style="left:270px;top:318px;font-size:12px;line-height:15px;height:15px;color:#7d7d7d;letter-spacing:-0.45px;">Detail</div>
<div style="left:328px;top:218px;width:1px;height:96px;background:repeating-linear-gradient(180deg,#6a6a6a 0 3px,transparent 3px 5px)"></div>
<div style="left:952px;top:218px;width:1px;height:96px;background:repeating-linear-gradient(180deg,#6a6a6a 0 3px,transparent 3px 5px)"></div>
<div style="left:328px;top:335px;width:1px;height:192px;background:repeating-linear-gradient(180deg,#6a6a6a 0 3px,transparent 3px 5px)"></div>
<div style="left:952px;top:335px;width:1px;height:192px;background:repeating-linear-gradient(180deg,#6a6a6a 0 3px,transparent 3px 5px)"></div>
<div style="left:232px;top:431px;width:816px;height:1px;background:repeating-linear-gradient(90deg,#6a6a6a 0 3px,transparent 3px 5px)"></div>
<!-- gs -->
<div style="left:195px;top:631px;width:939px;height:205px;background:#f6f6f6;border:1px solid #c8c8c8"></div>
<div class="t" id="t55" style="left:208px;top:641px;font-size:14px;line-height:17px;height:17px;letter-spacing:-0.02px;">Group and Sort</div>
<svg style="left:1094px;top:645px;" width="8" height="9" viewBox="0 0 8 9"><path d="M1,0.5 H6 M1.5,0 V5.5 M0,5.5 H7 M3.5,6 V8" stroke="#6e6e6e" stroke-width="1" fill="none"/><rect x="3" y="0" width="3" height="5.5" fill="#6e6e6e"/></svg>
<svg style="left:1112px;top:645px;" width="9" height="8" viewBox="0 0 9 8"><path d="M0.6,0.3 L8.4,7 M8.4,0.3 L0.6,7" stroke="#6e6e6e" stroke-width="1.55"/></svg>
<svg style="left:208px;top:675px;" width="12" height="12" viewBox="0 0 12 12"><rect x="0" y="0" width="6.6" height="7" fill="#bcbcbc"/><rect x="3.2" y="2.8" width="8.8" height="9" fill="#a9a9a9" stroke="#f6f6f6" stroke-width="0.9"/><path d="M9.4,0.5 H11.5 V2.2 M0.5,9 V11.5 H2.6" fill="none" stroke="#a9a9a9" stroke-width="1"/></svg>
<div class="t dis" id="t56" style="left:226.5px;top:675px;letter-spacing:0.33px;">Add a Group</div>
<svg style="left:295px;top:679px;" width="6" height="4" viewBox="0 0 6 4"><path d="M0,0 H6 L3,3.2 Z" fill="#9a9a9a"/></svg>
<svg style="left:316px;top:675px;" width="13" height="12" viewBox="0 0 13 12"><path d="M0,0 H8 L4,6.4 Z" fill="#a9a9a9"/><path d="M8,5.4 L12,11.6 H4 Z" fill="#bcbcbc"/></svg>
<div class="t dis" id="t57" style="left:334.5px;top:675px;letter-spacing:0.25px;">Add a Sort</div>
<svg style="left:391.5px;top:679px;" width="6" height="4" viewBox="0 0 6 4"><path d="M0,0 H6 L3,3.2 Z" fill="#9a9a9a"/></svg>
<svg style="left:410.5px;top:676.5px;" width="11" height="10" viewBox="0 0 11 10"><path d="M0.8,0.8 L10,9.2 M10,0.8 L0.8,9.2" stroke="#a9a9a9" stroke-width="2"/></svg>
<div class="t dis" id="t58" style="left:428px;top:675px;letter-spacing:0.2px;">Delete</div>
<div style="left:469px;top:672px;width:1px;height:18px;background:#d0d0d0;"></div>
<svg style="left:480.5px;top:676px;" width="11" height="11" viewBox="0 0 11 11"><circle cx="5.5" cy="5.5" r="5.3" fill="#a9a9a9"/><path d="M5.5,8.6 V3 M3.2,5.2 L5.5,2.8 L7.8,5.2" fill="none" stroke="#f6f6f6" stroke-width="1.3"/></svg>
<div class="t dis" id="t59" style="left:498px;top:675px;letter-spacing:0.5px;">Move Up</div>
<svg style="left:558.5px;top:676px;" width="11" height="11" viewBox="0 0 11 11"><circle cx="5.5" cy="5.5" r="5.3" fill="#a9a9a9"/><path d="M5.5,2.4 V8 M3.2,5.8 L5.5,8.2 L7.8,5.8" fill="none" stroke="#f6f6f6" stroke-width="1.3"/></svg>
<div class="t dis" id="t60" style="left:576.5px;top:675px;letter-spacing:0.6px;">Move Down</div>
<div style="left:197px;top:695px;width:935px;height:111px;background:#fff;border:1px solid #cfcfcf"></div>
<div style="left:198px;top:696px;width:933px;height:19px;background:#f6f6f6;"></div>
<div style="left:198px;top:715px;width:933px;height:1px;background:#cfcfcf;"></div>
<div style="left:424px;top:696px;width:1px;height:19px;background:#cfcfcf;"></div>
<div style="left:516px;top:696px;width:1px;height:19px;background:#cfcfcf;"></div>
<div style="left:608px;top:696px;width:1px;height:19px;background:#cfcfcf;"></div>
<div style="left:700px;top:696px;width:1px;height:19px;background:#cfcfcf;"></div>
<div class="t" id="t61" style="left:201px;top:699px;letter-spacing:-0.42px;">Field Name</div>
<div class="t" id="t62" style="left:428px;top:699px;letter-spacing:-0.04px;">Sort Order</div>
<div class="t" id="t63" style="left:520px;top:699px;letter-spacing:-0.24px;">Show Header</div>
<div class="t" id="t64" style="left:612px;top:699px;letter-spacing:-0.12px;">Show Footer</div>
<svg style="left:211px;top:813.8px;" width="15" height="13" viewBox="0 0 15 13"><rect x="0" y="0" width="8.8" height="9.2" fill="#1e6fd6"/><path d="M3.6,4.2 H15 L9.3,12.6 Z" fill="#f6f6f6"/><path d="M5,5.2 H14 L9.5,12 Z" fill="#1a9a2e"/></svg>
<div class="t" id="t65" style="left:229.5px;top:814px;color:#19478a;letter-spacing:-0.16px;">Group and Sort</div>
<div style="left:315px;top:808px;width:1px;height:24px;background:#d4d4d4;"></div>
<svg style="left:327px;top:814px;" width="16" height="14" viewBox="0 0 16 14"><rect x="0.5" y="0.5" width="13" height="11" fill="#fff" stroke="#5a5a5a"/><rect x="0" y="0" width="14" height="2.6" fill="#5a5a5a"/><path d="M8,1.3 h1 M10,1.3 h1 M12,1.3 h1" stroke="#fff" stroke-width="1"/><path d="M5.6,4.6 L3.2,7 L5.6,9.4" fill="none" stroke="#5a5a5a" stroke-width="1.3"/><circle cx="10.8" cy="10.2" r="4.2" fill="#f6f6f6"/><circle cx="10.8" cy="10.2" r="3.6" fill="#e02424"/><path d="M9.3,8.7 L12.3,11.7 M12.3,8.7 L9.3,11.7" stroke="#fff" stroke-width="1.3"/></svg>
<div class="t" id="t66" style="left:345.5px;top:814px;letter-spacing:-0.22px;">Scripts Errors</div>
<div style="left:422px;top:808px;width:1px;height:24px;background:#d4d4d4;"></div>
<!-- right -->
<div style="left:1138px;top:149px;width:246px;height:307px;background:#f6f6f6;border:1px solid #c8c8c8"></div>
<div class="t" id="t67" style="left:1151px;top:159px;font-size:14px;line-height:17px;height:17px;letter-spacing:-0.6px;">Field List</div>
<svg style="left:1324px;top:163px;" width="9" height="7" viewBox="0 0 9 7"><rect x="0.5" y="0.5" width="8" height="6" fill="none" stroke="#6e6e6e"/><rect x="0" y="0" width="9" height="2" fill="#6e6e6e"/></svg>
<svg style="left:1344px;top:163px;" width="8" height="9" viewBox="0 0 8 9"><path d="M1,0.5 H6 M1.5,0 V5.5 M0,5.5 H7 M3.5,6 V8" stroke="#6e6e6e" stroke-width="1" fill="none"/><rect x="3" y="0" width="3" height="5.5" fill="#6e6e6e"/></svg>
<svg style="left:1362px;top:163px;" width="9" height="8" viewBox="0 0 9 8"><path d="M0.6,0.3 L8.4,7 M8.4,0.3 L0.6,7" stroke="#6e6e6e" stroke-width="1.55"/></svg>
<div style="left:1140px;top:185px;width:242px;height:241px;background:#fff;border:1px solid #cfcfcf"></div>
<div style="left:1177px;top:186px;width:101px;height:18px;background:#e5f1fb;"></div>
<svg style="left:1147px;top:192px;" width="8" height="8" viewBox="0 0 8 8"><path d="M7,0.5 V7 H0.5 Z" fill="#7a7a7a"/></svg>
<svg style="left:1159.5px;top:188.5px;" width="16" height="13" viewBox="0 0 16 13"><rect x="0.5" y="0.5" width="14" height="12" fill="#fff" stroke="#6e6e6e"/><rect x="0.2" y="0.2" width="14.6" height="3.4" fill="#f4b892" stroke="#e39564" stroke-width="0.8"/><path d="M0.5,6.5 H14.5 M0.5,9.5 H14.5 M5.2,3.8 V12.5 M9.8,3.8 V12.5" stroke="#7a7a7a" stroke-width="0.9"/></svg>
<div class="t" id="t68" style="left:1180.5px;top:189px;letter-spacing:-0.07px;">Report Data</div>
<svg style="left:1167px;top:209px;" width="5" height="9" viewBox="0 0 5 9"><path d="M0.5,0.5 L4.6,4.5 L0.5,8.5 Z" fill="#7a7a7a"/></svg>
<svg style="left:1177.5px;top:206.5px;" width="16" height="13" viewBox="0 0 16 13"><rect x="0.5" y="0.5" width="14" height="12" fill="#fff" stroke="#6e6e6e"/><rect x="0.2" y="0.2" width="14.6" height="3.4" fill="#f4b892" stroke="#e39564" stroke-width="0.8"/><path d="M0.5,6.5 H14.5 M0.5,9.5 H14.5 M5.2,3.8 V12.5 M9.8,3.8 V12.5" stroke="#7a7a7a" stroke-width="0.9"/></svg>
<div class="t" id="t69" style="left:1198.5px;top:207px;letter-spacing:-0.13px;">Query Results</div>
<svg style="left:1155px;top:434px;" width="14" height="15" viewBox="0 0 14 15"><rect x="0.6" y="0.6" width="9" height="10.6" fill="#fff" stroke="#5a5a5a" stroke-width="1.2"/><circle cx="5" cy="4.8" r="2.9" fill="#1e6fd6"/><path d="M5.4,4.4 V1.4 A3,3 0 0 1 8.4,4.4 Z" fill="#fff"/><path d="M5.9,4 V2.4 A2,2 0 0 1 7.6,4 Z" fill="#1e6fd6"/><path d="M2.4,8.8 H5" stroke="#9a9a9a" stroke-width="0.9"/><path d="M6,9.2 H8.4 L9.2,10 H12.2 V14 H6 Z" fill="#f9a825"/></svg>
<div class="t" id="t70" style="left:1172px;top:434px;letter-spacing:-0.1px;">Report Explorer</div>
<div style="left:1261px;top:428px;width:1px;height:24px;background:#d4d4d4;"></div>
<svg style="left:1272.5px;top:433.5px;" width="16" height="15" viewBox="0 0 16 15"><path d="M0.5,3 V11.6 A5,2 0 0 0 10.5,11.6 V3 Z" fill="#fba919"/><ellipse cx="5.5" cy="3" rx="5" ry="2.2" fill="#fba919"/><ellipse cx="5.5" cy="3.1" rx="3.8" ry="1.4" fill="#fff"/><rect x="6.2" y="5.6" width="8.6" height="7.4" fill="#f6f6f6"/><rect x="7" y="6.3" width="7.2" height="2.6" fill="#fff" stroke="#6a6a6a" stroke-width="1"/><rect x="7" y="10" width="7.2" height="2.6" fill="#fff" stroke="#6a6a6a" stroke-width="1"/></svg>
<div class="t" id="t71" style="left:1291.5px;top:434px;color:#19478a;letter-spacing:-0.3px;">Field List</div>
<div style="left:1345px;top:428px;width:1px;height:24px;background:#d4d4d4;"></div>
<div style="left:1138px;top:460px;width:246px;height:376px;background:#f6f6f6;border:1px solid #c8c8c8"></div>
<div class="t" id="t72" style="left:1151px;top:470px;font-size:14px;line-height:17px;height:17px;letter-spacing:-0.13px;">Property Grid</div>
<svg style="left:1324px;top:474px;" width="9" height="7" viewBox="0 0 9 7"><rect x="0.5" y="0.5" width="8" height="6" fill="none" stroke="#6e6e6e"/><rect x="0" y="0" width="9" height="2" fill="#6e6e6e"/></svg>
<svg style="left:1344px;top:474px;" width="8" height="9" viewBox="0 0 8 9"><path d="M1,0.5 H6 M1.5,0 V5.5 M0,5.5 H7 M3.5,6 V8" stroke="#6e6e6e" stroke-width="1" fill="none"/><rect x="3" y="0" width="3" height="5.5" fill="#6e6e6e"/></svg>
<svg style="left:1362px;top:474px;" width="9" height="8" viewBox="0 0 9 8"><path d="M0.6,0.3 L8.4,7 M8.4,0.3 L0.6,7" stroke="#6e6e6e" stroke-width="1.55"/></svg>
<div style="left:1140px;top:496px;width:242px;height:22px;background:#fff;border:1px solid #ababab"></div>
<div style="left:1365px;top:497px;width:16px;height:20px;background:linear-gradient(#f4f4f4,#e4e4e4);border-left:1px solid #ababab"></div>
<svg style="left:1369px;top:504px;" width="9" height="6" viewBox="0 0 9 6"><path d="M0.8,0.8 L4.5,4.6 L8.2,0.8" fill="none" stroke="#666" stroke-width="1.5"/></svg>
<div class="t" id="t73" style="left:1144px;top:500px;font-size:12px;line-height:15px;height:15px;font-weight:bold;color:#2b2b2b;letter-spacing:-0.27px;">CustomQueryReportBase</div>
<div class="t" id="t74" style="left:1294px;top:500px;font-size:12px;line-height:15px;height:15px;font-weight:bold;color:#2b2b2b;letter-spacing:0.05px;">Report</div>
<div style="left:1142px;top:520px;width:26px;height:24px;background:#b1d6f0;"></div>
<svg style="left:1147px;top:524px;" width="17" height="16" viewBox="0 0 17 16"><g shape-rendering="crispEdges"><rect x="0.5" y="0.5" width="6" height="6" fill="#fff" stroke="#2a64ad" stroke-width="1"/><rect x="0.5" y="9.5" width="6" height="6" fill="#fff" stroke="#2a64ad" stroke-width="1"/><path d="M2,3.5 H5 M3.5,2 V5 M2,12.5 H5 M3.5,11 V14" stroke="#222" stroke-width="1"/><path d="M9,1.5 h3 M9,10.5 h3" stroke="#6a6a6a" stroke-width="1"/><path d="M9,3.5 h3 M13,3.5 h3 M9,5.5 h3 M13,5.5 h3 M9,12.5 h3 M13,12.5 h3 M9,14.5 h3 M13,14.5 h3" stroke="#9a9a9a" stroke-width="1"/></g></svg>
<div class="t" style="left:1173.5px;top:523.5px;font-size:9px;font-weight:bold;line-height:10px;height:10px;color:#6e6e6e">A</div>
<div class="t" style="left:1174px;top:530.5px;font-size:9px;font-weight:bold;line-height:10px;height:10px;color:#6e6e6e">Z</div>
<svg style="left:1181px;top:524px;" width="8" height="16" viewBox="0 0 8 16"><path d="M3.5,1 V11" stroke="#2a64ad" stroke-width="1.1"/><path d="M0.6,10.4 H6.4 L3.5,15 Z" fill="#2a64ad"/></svg>
<div style="left:1197px;top:523px;width:1px;height:18px;background:#c8c8c8;"></div>
<div style="left:1201px;top:520px;width:26px;height:24px;background:#b1d6f0;"></div>
<svg style="left:1206px;top:524px;" width="16" height="16" viewBox="0 0 16 16"><path d="M11.2,1.2 A4.2,4.2 0 1 0 14.6,6.4 L12,7.2 L9.6,5.4 L10,2.4 Z" fill="#666"/><path d="M8.6,7.6 L2.2,14" stroke="#666" stroke-width="3" stroke-linecap="round"/></svg>
<svg style="left:1234.5px;top:524px;" width="12" height="16" viewBox="0 0 12 16"><path d="M10.4,1.6 Q7.4,0 6.4,3.8 L4.4,11.6 Q3.4,15.2 0.6,13.8" fill="none" stroke="#3a74b8" stroke-width="1.9"/><path d="M1.6,6.4 Q5.5,7.6 10.2,5.4" fill="none" stroke="#3a74b8" stroke-width="1.6"/></svg>
<div style="left:1140px;top:547px;width:242px;height:217px;background:#fff;border:1px solid #c6c6c6;border-left:2px solid #c4c4c4"></div>
<div style="left:1142px;top:548px;width:221px;height:215px;background:#f6f6f6;"></div>
<div class="t" id="t75" style="left:1161.5px;top:550px;font-size:12px;line-height:15px;height:15px;font-weight:bold;color:#19478a;letter-spacing:-0.12px;">Appearance</div>
<svg style="left:1349px;top:554px;" width="8" height="4" viewBox="0 0 8 4"><path d="M0,4 H7.4 L3.7,0 Z" fill="#4a4a4a"/></svg>
<div style="left:1253px;top:566px;width:110px;height:197px;background:#fff;"></div>
<div style="left:1158px;top:565px;width:205px;height:1px;background:#cfcfcf;"></div>
<div style="left:1158px;top:584px;width:205px;height:1px;background:#cfcfcf;"></div>
<div style="left:1158px;top:603px;width:205px;height:1px;background:#cfcfcf;"></div>
<div style="left:1158px;top:622px;width:205px;height:1px;background:#cfcfcf;"></div>
<div style="left:1158px;top:639px;width:205px;height:1px;background:#cfcfcf;"></div>
<div style="left:1158px;top:658px;width:205px;height:1px;background:#cfcfcf;"></div>
<div style="left:1158px;top:677px;width:205px;height:1px;background:#cfcfcf;"></div>
<div style="left:1158px;top:696px;width:205px;height:1px;background:#cfcfcf;"></div>
<div style="left:1158px;top:713px;width:205px;height:1px;background:#cfcfcf;"></div>
<div style="left:1158px;top:732px;width:205px;height:1px;background:#cfcfcf;"></div>
<div style="left:1158px;top:751px;width:205px;height:1px;background:#cfcfcf;"></div>
<div style="left:1157px;top:565px;width:1px;height:198px;background:#cfcfcf;"></div>
<div style="left:1252px;top:565px;width:1px;height:198px;background:#cfcfcf;"></div>
<div style="left:1363px;top:548px;width:1px;height:215px;background:#cfcfcf;"></div>
<div class="t" id="t76" style="left:1175.5px;top:569px;letter-spacing:-0.12px;">Background C...</div>
<div style="left:1259px;top:570px;width:22px;height:10px;background:#fff;border:1px solid #222"></div>
<div class="t" id="t77" style="left:1285px;top:569px;">Transparent</div>
<div class="t" id="t78" style="left:1175.5px;top:588px;letter-spacing:-0.2px;">Border Color</div>
<div style="left:1259px;top:589px;width:22px;height:10px;background:#000;border:1px solid #222"></div>
<div class="t" id="t79" style="left:1285px;top:588px;letter-spacing:-0.38px;">Black</div>
<div class="t" id="t80" style="left:1175.5px;top:607px;letter-spacing:-0.15px;">Border Dash S..</div>
<div class="t" id="t81" style="left:1256.5px;top:607px;letter-spacing:-0.29px;">Solid</div>
<div class="t" id="t82" style="left:1175.5px;top:625px;letter-spacing:-0.1px;">Border Width</div>
<div class="t" id="t83" style="left:1256.5px;top:625px;">1</div>
<div class="t" id="t84" style="left:1175.5px;top:643px;letter-spacing:-0.22px;">Borders</div>
<div class="t" id="t85" style="left:1256.5px;top:643px;letter-spacing:-0.32px;">None</div>
<div class="t" id="t86" style="left:1175.5px;top:662px;">Font</div>
<div class="t" id="t87" style="left:1256.5px;top:662px;letter-spacing:-0.12px;">Times New Roman,...</div>
<svg style="left:1164px;top:664px;" width="5" height="8" viewBox="0 0 5 8"><path d="M0.5,0.3 L4.2,3.8 L0.5,7.3 Z" fill="#6a6a6a"/></svg>
<div class="t" id="t88" style="left:1175.5px;top:681px;">Foreground C...</div>
<div style="left:1259px;top:682px;width:22px;height:10px;background:#000;border:1px solid #222"></div>
<div class="t" id="t89" style="left:1285px;top:681px;letter-spacing:-0.38px;">Black</div>
<div class="t" id="t90" style="left:1175.5px;top:699px;letter-spacing:-0.34px;">Padding</div>
<div class="t" id="t91" style="left:1256.5px;top:699px;letter-spacing:0.22px;">0, 0, 0, 0</div>
<svg style="left:1164px;top:701px;" width="5" height="8" viewBox="0 0 5 8"><path d="M0.5,0.3 L4.2,3.8 L0.5,7.3 Z" fill="#6a6a6a"/></svg>
<div class="t" id="t92" style="left:1175.5px;top:717px;letter-spacing:-0.3px;">Page Color</div>
<div style="left:1259px;top:718px;width:22px;height:10px;background:#fff;border:1px solid #222"></div>
<div class="t" id="t93" style="left:1285px;top:717px;letter-spacing:-0.23px;">White</div>
<div class="t" id="t94" style="left:1175.5px;top:736px;letter-spacing:-0.02px;">Style Sheet</div>
<div class="t" id="t95" style="left:1256.5px;top:736px;letter-spacing:-0.14px;">(Collection)</div>
<div class="t" id="t96" style="left:1175.5px;top:755px;letter-spacing:-0.14px;">Style Sheet's</div>
<div style="left:1139px;top:763px;width:244px;height:12px;background:#f6f6f6;"></div>
<div style="left:1140px;top:763px;width:242px;height:1px;background:#c6c6c6;"></div>
<div style="left:1364px;top:548px;width:17px;height:215px;background:#efefef;"></div>
<div style="left:1364px;top:565px;width:17px;height:31px;background:#c9c9c9;"></div>
<svg style="left:1368px;top:552px;" width="9" height="6" viewBox="0 0 9 6"><path d="M0.8,5 L4.5,1.2 L8.2,5" fill="none" stroke="#666" stroke-width="1.4"/></svg>
<svg style="left:1368px;top:752px;" width="9" height="6" viewBox="0 0 9 6"><path d="M0.8,1 L4.5,4.8 L8.2,1" fill="none" stroke="#666" stroke-width="1.4"/></svg>
<svg style="left:1252px;top:769px;" width="18" height="2" viewBox="0 0 18 2"><path d="M0,1 h2 M4,1 h2 M8,1 h2 M12,1 h2 M16,1 h2" stroke="#555" stroke-width="1.6"/></svg>
<div style="left:1140px;top:776px;width:242px;height:58px;background:#f6f6f6;border:1px solid #cfcfcf"></div>
<!-- status -->
<div style="left:2px;top:836px;width:1384px;height:2px;background:#fdfdfd;"></div>
<div style="left:0px;top:838px;width:1387px;height:24px;background:#19478a;"></div>
<div class="t" id="t97" style="left:10px;top:844px;color:#fff;letter-spacing:-0.05px;">CustomQueryReportBase { PaperKind: Letter }</div>
<div style="left:244px;top:841px;width:1px;height:18px;background:#fff;"></div>
<div style="left:287px;top:841px;width:1px;height:18px;background:#fff;"></div>
<div style="left:390px;top:841px;width:1px;height:18px;background:#fff;"></div>
<div class="t" id="t98" style="left:294.5px;top:844px;color:#fff;letter-spacing:-0.15px;">Record Count:</div>
<div class="t" id="t99" style="left:377px;top:844px;color:#fff;">0</div>
<svg style="left:397px;top:841px;" width="18" height="18" viewBox="0 0 18 18"><path d="M9,1 L17,16.4 H1 Z" fill="#ecb266" stroke="#c9954a" stroke-width="0.6"/><path d="M9,6 V11.6" stroke="#222" stroke-width="2"/><circle cx="9" cy="14" r="1.1" fill="#222"/></svg>
<div class="t" id="t100" style="left:418.5px;top:844px;color:#fff;letter-spacing:-0.08px;">Partial query results in use</div>
<div class="t" id="t101" style="left:1177px;top:844px;color:#fff;letter-spacing:-0.04px;">100%</div>
<div style="left:1223px;top:849px;width:7px;height:1px;background:#fff;"></div>
<div style="left:1237px;top:849px;width:102px;height:1px;background:#fff;"></div>
<div style="left:1286px;top:845px;width:3px;height:9px;background:#a8cdf0;"></div>
<div style="left:1346px;top:849px;width:7px;height:1px;background:#fff;"></div>
<div style="left:1349px;top:846px;width:1px;height:7px;background:#fff;"></div>
<svg style="left:1377px;top:852px;" width="8" height="8" viewBox="0 0 8 8"><rect x="6" y="0" width="1.2" height="1.2" fill="#9fb8dc"/><rect x="4" y="2" width="1.2" height="1.2" fill="#9fb8dc"/><rect x="6" y="2" width="1.2" height="1.2" fill="#9fb8dc"/><rect x="2" y="4" width="1.2" height="1.2" fill="#9fb8dc"/><rect x="4" y="4" width="1.2" height="1.2" fill="#9fb8dc"/><rect x="6" y="4" width="1.2" height="1.2" fill="#9fb8dc"/><rect x="0" y="6" width="1.2" height="1.2" fill="#9fb8dc"/><rect x="2" y="6" width="1.2" height="1.2" fill="#9fb8dc"/><rect x="4" y="6" width="1.2" height="1.2" fill="#9fb8dc"/><rect x="6" y="6" width="1.2" height="1.2" fill="#9fb8dc"/></svg>
<div style="left:0px;top:0px;width:2px;height:862px;background:#1a4384;"></div><div style="left:0px;top:0px;width:1px;height:862px;background:#173468;"></div><div style="left:0px;top:0px;width:1387px;height:1px;background:#173468;"></div><div style="left:1386px;top:0px;width:1px;height:862px;background:#173468;"></div>
</div>
</body>
</html>
